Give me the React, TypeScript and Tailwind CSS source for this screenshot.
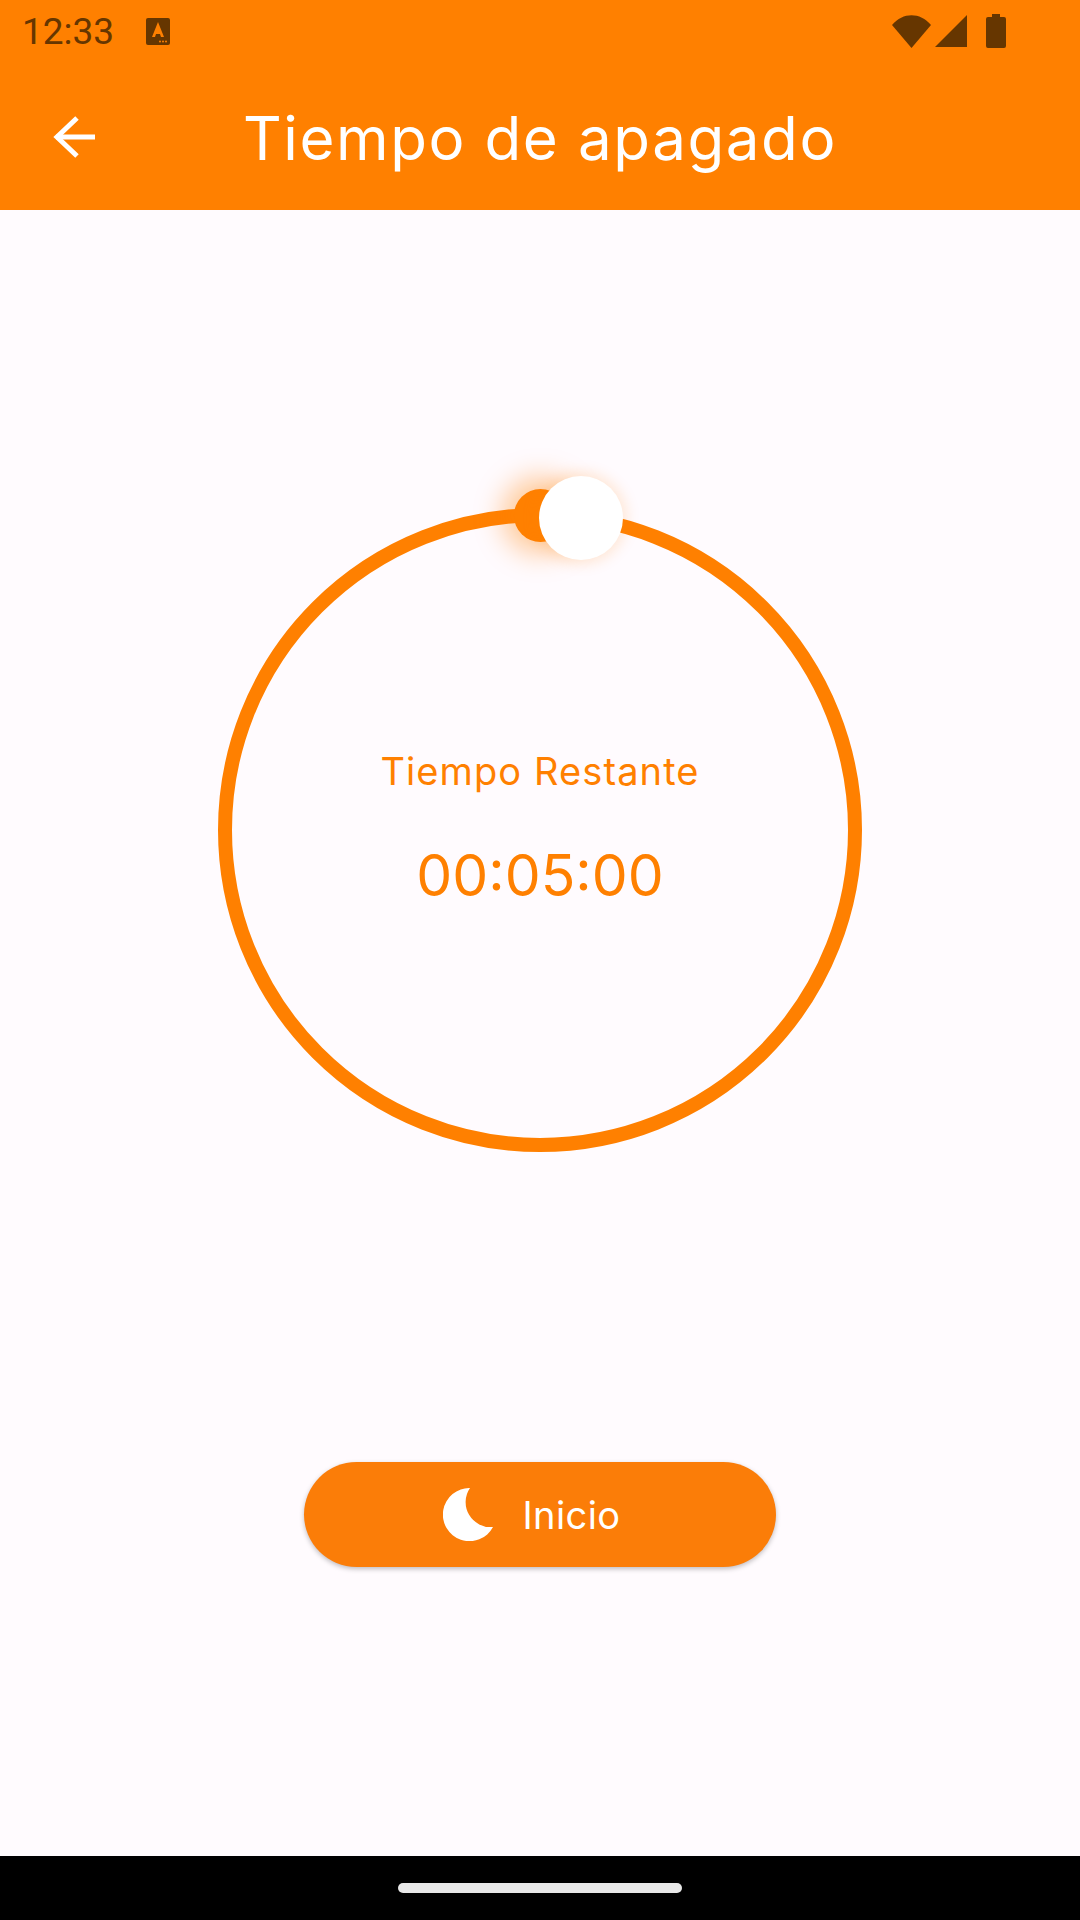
function StatusBar() {
  return (
    <div className="flex h-[70px] items-center pb-[8px] pl-[22px] pr-[74px]">
      <span className="font-['Roboto',sans-serif] text-[37px] leading-none text-[#663600]">12:33</span>
      <svg width="24" height="27" viewBox="0 0 24 27" className="ml-[32px]">
        <rect width="24" height="27" rx="2" fill="#663600" />
        <path d="M12 4 L18 19 H15 L14 16 H10 L9 19 H6 Z" fill="#ff8000" />
        <circle cx="14" cy="23.5" r="1" fill="#ff8000" />
        <circle cx="17" cy="23.5" r="1" fill="#ff8000" />
        <circle cx="20" cy="23.5" r="1" fill="#ff8000" />
      </svg>
      <div className="ml-auto flex items-center">
        <svg width="39" height="33" viewBox="0 0 39 33">
          <path d="M0 10 C11 -3 28 -3 39 10 L19.500 33 Z" fill="#663600" />
        </svg>
        <svg width="32" height="32" viewBox="0 0 32 32" className="ml-[4px]">
          <path d="M32 0 V32 H0 Z" fill="#663600" />
        </svg>
        <svg width="20" height="34" viewBox="0 0 20 34" className="ml-[19px]">
          <path d="M6 0 H14 V3 H18 Q20 3 20 5 V32 Q20 34 18 34 H2 Q0 34 0 32 V5 Q0 3 2 3 H6 Z" fill="#663600" />
        </svg>
      </div>
    </div>
  );
}

function Dial() {
  return (
    <div className="relative h-[644px] w-[644px] rounded-full border-[14px] border-[#ff8000]">
      <div className="absolute left-[282px] top-[-33px] h-[53px] w-[53px] rounded-full bg-[#ff8000] shadow-[0_0_28px_12px_rgba(255,128,0,0.4)]" />
      <div className="absolute left-[307px] top-[-46px] h-[84px] w-[84px] rounded-full bg-white shadow-[0_0_14px_4px_rgba(255,128,0,0.16)]" />
      <div className="flex h-full flex-col items-center font-['Inter',sans-serif] text-[#ff8000]">
        <span className="mt-[227px] text-[38px] leading-[44px] tracking-[1.1px]">Tiempo Restante</span>
        <span className="mt-[43px] text-[57px] leading-[80px]">00:05:00</span>
      </div>
    </div>
  );
}

export default function App() {
  return (
    <div className="flex h-[1920px] w-[1080px] flex-col overflow-hidden bg-[#fffbfe] font-['Inter',sans-serif]">
      <header className="h-[210px] bg-[#ff8000]">
        <StatusBar />
        <div className="relative flex h-[140px] items-center justify-center pb-[5px] text-white">
          <svg width="44" height="46" viewBox="0 0 44 46" fill="none" stroke="#ffffff" strokeWidth="5" className="absolute left-[52px] top-[44px]">
            <path d="M4 23 H43" />
            <path d="M25 4 L5 23 L25 42" />
          </svg>
          <h1 className="text-[60px] font-normal leading-none tracking-[1.6px]">Tiempo de apagado</h1>
        </div>
      </header>

      <main className="flex flex-1 flex-col items-center pt-[298px]">
        <Dial />
        <button
          type="button"
          className="mt-[310px] flex h-[105px] w-[472px] items-center justify-center rounded-full bg-[#fb7d08] pr-[17px] text-white shadow-[0_2px_5px_rgba(0,0,0,0.25)]"
        >
          <svg width="50" height="53" viewBox="0 0 50 53" className="mr-[30px]">
            <path d="M27 0 A25 25 0 0 0 50 39 A26.600 26.600 0 1 1 27 0 Z" fill="#ffffff" />
          </svg>
          <span className="text-[38px] leading-none tracking-[0.4px]">Inicio</span>
        </button>
      </main>

      <nav className="flex h-[64px] items-start justify-center bg-black pt-[27px]">
        <div className="h-[10px] w-[284px] rounded-full bg-[#e8e8e8]" />
      </nav>
    </div>
  );
}
